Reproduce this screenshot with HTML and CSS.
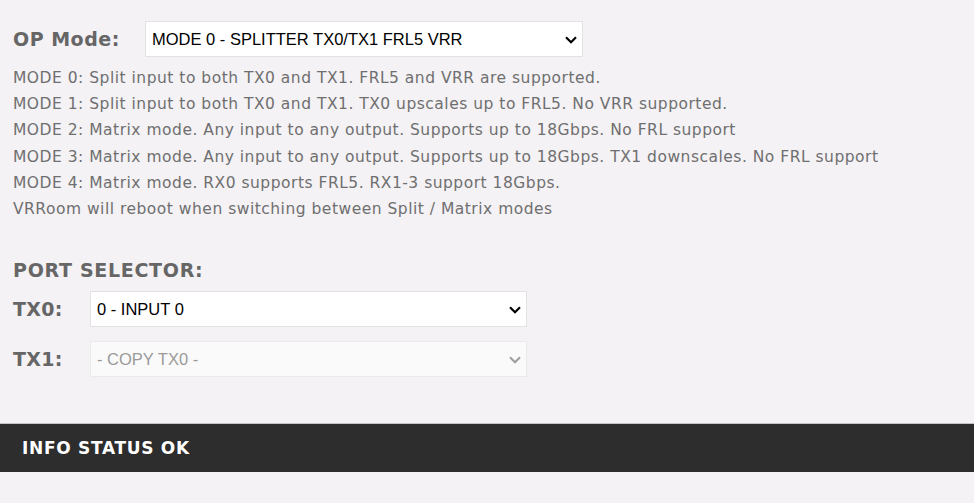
FILE: index.html
```html
<!DOCTYPE html>
<html lang="en">
<head>
    <meta charset="UTF-8">
    <meta name="viewport" content="width=device-width, initial-scale=1.0">
    <title>VRRoom Config</title>
    <link rel="stylesheet" href="styles.css">
</head>
<body>
    <div class="page">
        <div class="op-row">
            <label class="op-label" for="opMode">OP Mode:</label>
            <div class="select-wrap op-wrap">
                <select id="opMode">
                    <option>MODE 0 - SPLITTER TX0/TX1 FRL5 VRR</option>
                    <option>MODE 1 - SPLITTER TX0/TX1 UPSCALE FRL5</option>
                    <option>MODE 2 - MATRIX TMDS</option>
                    <option>MODE 3 - MATRIX TMDS DOWNSCALE</option>
                    <option>MODE 4 - MATRIX RX0:FRL5 + RX1-3:TMDS</option>
                </select>
                <svg class="chevron" width="12" height="8" viewBox="0 0 12 8"><path d="M1 1.2 L6 6.2 L11 1.2" fill="none" stroke="currentColor" stroke-width="2.2"/></svg>
            </div>
        </div>
        <div class="modes">
            <div>MODE 0: Split input to both TX0 and TX1. FRL5 and VRR are supported.</div>
            <div>MODE 1: Split input to both TX0 and TX1. TX0 upscales up to FRL5. No VRR supported.</div>
            <div>MODE 2: Matrix mode. Any input to any output. Supports up to 18Gbps. No FRL support</div>
            <div>MODE 3: Matrix mode. Any input to any output. Supports up to 18Gbps. TX1 downscales. No FRL support</div>
            <div>MODE 4: Matrix mode. RX0 supports FRL5. RX1-3 support 18Gbps.</div>
            <div>VRRoom will reboot when switching between Split / Matrix modes</div>
        </div>

        <h2 class="section-title">PORT SELECTOR:</h2>
        <div class="port-row">
            <label class="port-label" for="tx0">TX0:</label>
            <div class="select-wrap port-wrap">
                <select id="tx0">
                    <option>0 - INPUT 0</option>
                    <option>1 - INPUT 1</option>
                    <option>2 - INPUT 2</option>
                    <option>3 - INPUT 3</option>
                </select>
                <svg class="chevron" width="12" height="8" viewBox="0 0 12 8"><path d="M1 1.2 L6 6.2 L11 1.2" fill="none" stroke="currentColor" stroke-width="2.2"/></svg>
            </div>
        </div>
        <div class="port-row">
            <label class="port-label" for="tx1">TX1:</label>
            <div class="select-wrap port-wrap is-disabled">
                <select id="tx1" disabled>
                    <option>- COPY TX0 -</option>
                </select>
                <svg class="chevron" width="12" height="8" viewBox="0 0 12 8"><path d="M1 1.2 L6 6.2 L11 1.2" fill="none" stroke="currentColor" stroke-width="2.2"/></svg>
            </div>
        </div>
    </div>
    <div class="status-bar">INFO STATUS OK</div>
</body>
</html>
```

FILE: styles.css
```css
body {
    background-color: #f4f2f5;
    color: #666666;
    font-family: "DejaVu Sans", Verdana, sans-serif;
    margin: 0;
    padding: 0;
}
.page {
    padding: 21px 13px 0 13px;
}
.op-row {
    display: flex;
    align-items: center;
}
.op-label {
    width: 132px;
    font-size: 19px;
    font-weight: bold;
    letter-spacing: 0.5px;
}
.select-wrap {
    position: relative;
    color: #000000;
}
.select-wrap select {
    width: 100%;
    height: 36px;
    padding: 0 24px 0 6px;
    appearance: none;
    -webkit-appearance: none;
    background-color: #ffffff;
    color: #000000;
    border: 1px solid #e3e1e4;
    border-radius: 0;
    font-family: "Liberation Sans", Arial, sans-serif;
    font-size: 16.5px;
    box-sizing: border-box;
    outline: none;
}
.chevron {
    position: absolute;
    right: 6px;
    top: 15px;
    pointer-events: none;
}
.op-wrap {
    width: 438px;
}
.port-wrap {
    width: 437px;
}
.is-disabled {
    color: #a0a0a0;
}
.is-disabled select {
    background-color: #fafafa;
    color: #9a9a9a;
    border-color: #ebe9ec;
    opacity: 1;
}
.modes {
    margin-top: 8px;
    font-size: 15.5px;
    letter-spacing: 0.5px;
    line-height: 26.2px;
    color: #6f6f6f;
}
.section-title {
    margin: 37px 0 10px 0;
    font-size: 19px;
    font-weight: bold;
    letter-spacing: 0.7px;
}
.port-row {
    display: flex;
    align-items: center;
    margin-bottom: 14px;
}
.port-label {
    width: 77px;
    font-size: 19px;
    font-weight: bold;
    letter-spacing: 0.3px;
}
.status-bar {
    margin-top: 46px;
    height: 47px;
    line-height: 47px;
    padding: 1px 0 0 22px;
    background-color: #2d2d2d;
    border-top: 1px solid #c4c3c5;
    color: #ffffff;
    font-size: 17px;
    font-weight: bold;
    letter-spacing: 0.7px;
}
```
